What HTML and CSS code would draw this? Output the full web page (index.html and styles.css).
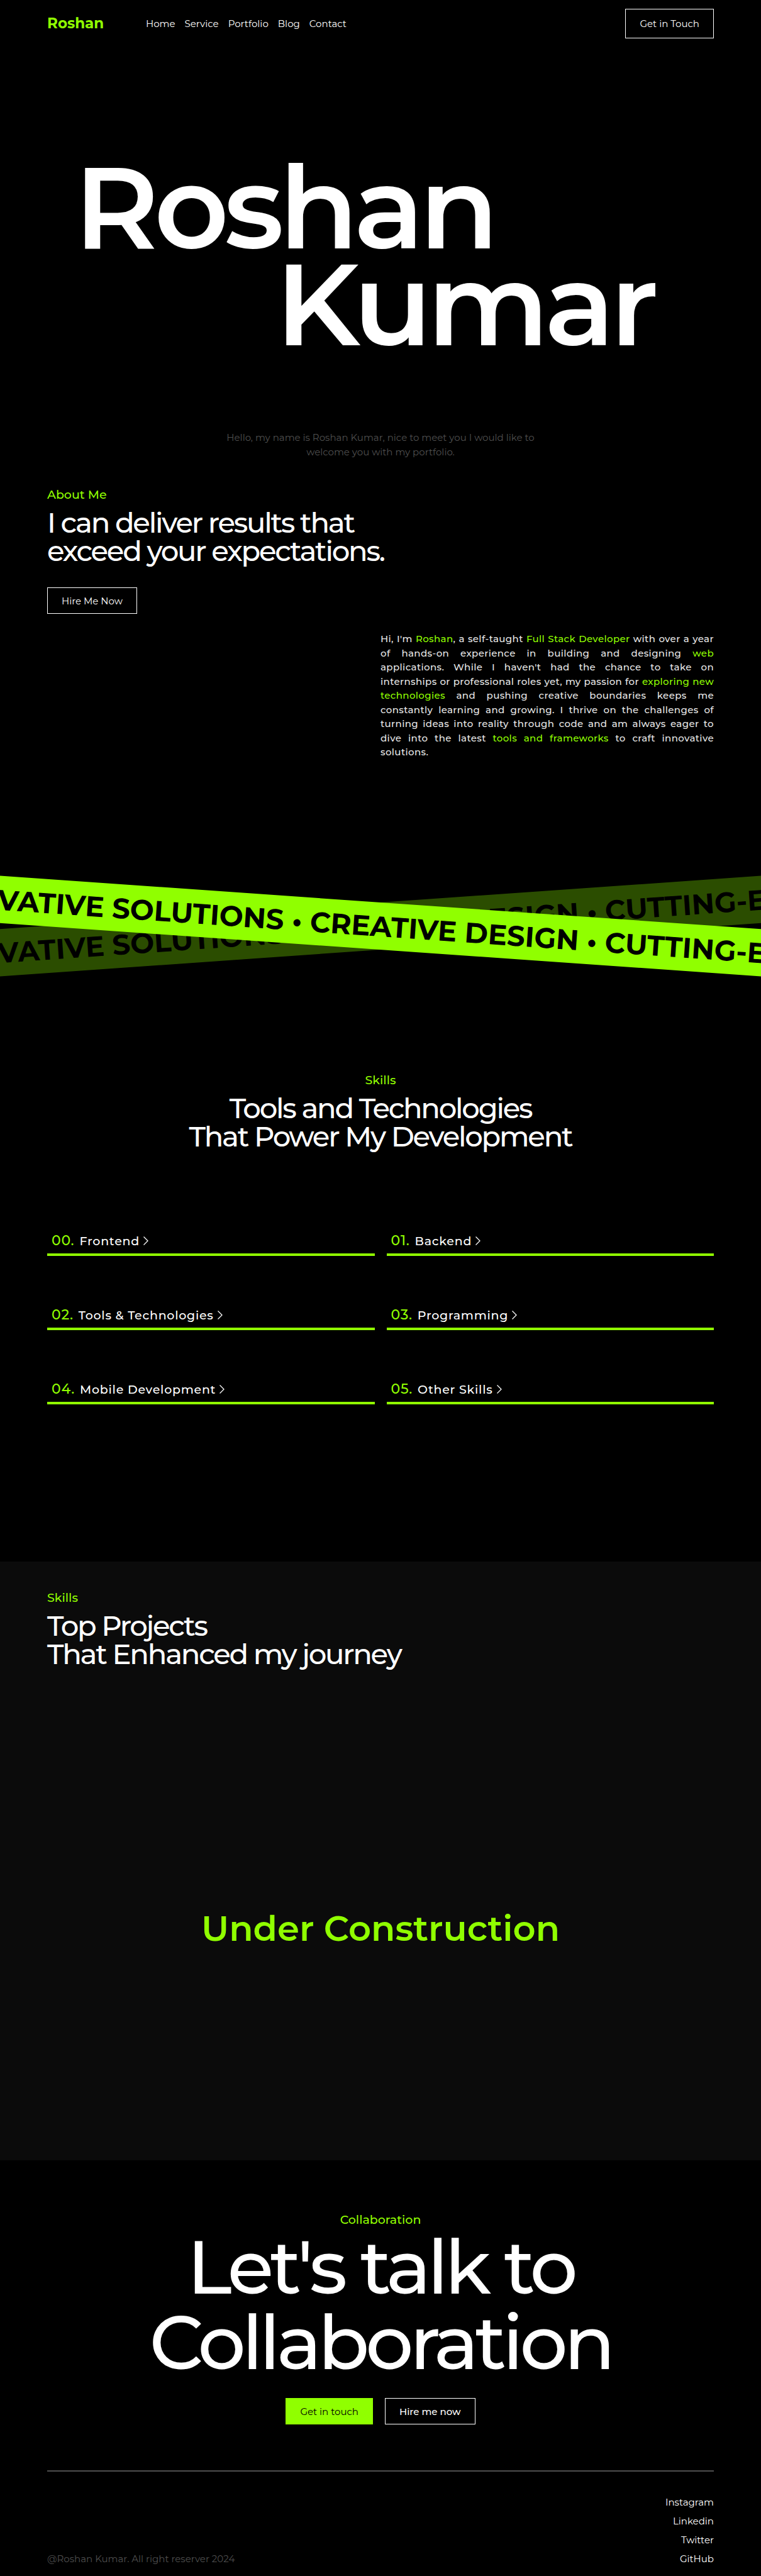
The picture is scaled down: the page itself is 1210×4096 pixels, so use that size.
FILE: index.html
```
<!DOCTYPE html>
<html lang="en">
<head>
<meta charset="utf-8">
<meta name="viewport" content="width=device-width, initial-scale=1">
<title>Roshan Kumar</title>
<link rel="stylesheet" href="styles.css">
</head>
<body>
<header class="header">
  <a class="logo" href="#home">Roshan</a>
  <nav class="nav">
    <a href="#home">Home</a>
    <a href="#skills">Service</a>
    <a href="#projects">Portfolio</a>
    <a href="#about">Blog</a>
    <a href="#contact">Contact</a>
  </nav>
  <button class="button button-tall" type="button">Get in Touch</button>
</header>

<main>
  <section class="hero" id="home">
    <h1 class="hero-title"><span>Roshan</span><span class="hero-last">Kumar</span></h1>
    <p class="hero-intro">Hello, my name is Roshan Kumar, nice to meet you I would like to<br>welcome you with my portfolio.</p>
  </section>

  <section class="about" id="about">
    <p class="label">About Me</p>
    <h2 class="heading">I can deliver results that<br>exceed your expectations.</h2>
    <button class="button" type="button">Hire Me Now</button>
    <p class="bio">Hi, I'm <em>Roshan</em>, a self-taught <em>Full Stack Developer</em> with over a year of hands-on experience in building and designing <em>web</em> applications. While I haven't had the chance to take on internships or professional roles yet, my passion for <em>exploring new technologies</em> and pushing creative boundaries keeps me constantly learning and growing. I thrive on the challenges of turning ideas into reality through code and am always eager to dive into the latest <em>tools and frameworks</em> to craft innovative solutions.</p>
  </section>

  <div class="ribbons">
    <div class="ribbon ribbon-back"><span>INNOVATIVE SOLUTIONS • CREATIVE DESIGN • CUTTING-EDGE</span></div>
    <div class="ribbon ribbon-front"><span>INNOVATIVE SOLUTIONS • CREATIVE DESIGN • CUTTING-EDGE</span></div>
  </div>

  <section class="skills" id="skills">
    <p class="label">Skills</p>
    <h2 class="heading">Tools and Technologies<br>That Power My Development</h2>
    <ul class="skill-grid">
      <li><span class="number">00.</span><a href="#skills">Frontend</a><svg class="chevron" viewBox="0 0 8 14"><path d="M.5.5 7 7 .5 13.500"/></svg></li>
      <li><span class="number">01.</span><a href="#skills">Backend</a><svg class="chevron" viewBox="0 0 8 14"><path d="M.5.5 7 7 .5 13.500"/></svg></li>
      <li><span class="number">02.</span><a href="#skills">Tools &amp; Technologies</a><svg class="chevron" viewBox="0 0 8 14"><path d="M.5.5 7 7 .5 13.500"/></svg></li>
      <li><span class="number">03.</span><a href="#skills">Programming</a><svg class="chevron" viewBox="0 0 8 14"><path d="M.5.5 7 7 .5 13.500"/></svg></li>
      <li><span class="number">04.</span><a href="#skills">Mobile Development</a><svg class="chevron" viewBox="0 0 8 14"><path d="M.5.5 7 7 .5 13.500"/></svg></li>
      <li><span class="number">05.</span><a href="#skills">Other Skills</a><svg class="chevron" viewBox="0 0 8 14"><path d="M.5.5 7 7 .5 13.500"/></svg></li>
    </ul>
  </section>

  <section class="projects" id="projects">
    <p class="label">Skills</p>
    <h2 class="heading">Top Projects<br>That Enhanced my journey</h2>
    <p class="notice">Under Construction</p>
  </section>

  <section class="contact" id="contact">
    <p class="label">Collaboration</p>
    <h2 class="contact-title">Let's talk to<br>Collaboration</h2>
    <div class="actions">
      <button class="button button-solid" type="button">Get in touch</button>
      <button class="button button-medium" type="button">Hire me now</button>
    </div>
  </section>
</main>

<footer class="footer">
  <p>@Roshan Kumar. All right reserver 2024</p>
  <nav class="social">
    <a href="#instagram">Instagram</a>
    <a href="#linkedin">Linkedin</a>
    <a href="#twitter">Twitter</a>
    <a href="#github">GitHub</a>
  </nav>
</footer>
</body>
</html>
```
FILE: styles.css
```
:root {
  --accent: #90ff00;
  --muted: #4f4f4f;
  --edge: 75px;
}

* {
  box-sizing: border-box;
}

body {
  margin: 0;
  background: #000;
  color: #fff;
  font-family: Montserrat, Inter, sans-serif;
  font-size: 15px;
  line-height: 23px;
}

h1, h2, p, ul {
  margin: 0;
  padding: 0;
  font-weight: 500;
}

a {
  color: inherit;
  text-decoration: none;
}

.header {
  display: flex;
  align-items: center;
  padding: 14px var(--edge);
}

.logo {
  width: 157px;
  color: var(--accent);
  font-size: 23px;
  font-weight: 700;
}

.nav {
  display: flex;
  gap: 15px;
  margin-right: auto;
}

.button {
  height: 42px;
  padding: 0 22px;
  border: 1px solid #fff;
  background: transparent;
  color: #fff;
  font: inherit;
}

.button-tall {
  height: 47px;
}

.button-medium {
  font-weight: 500;
}

.button-solid {
  border-color: var(--accent);
  background: var(--accent);
  color: #000;
}

.hero {
  padding: 177px var(--edge) 0;
}

.hero-title {
  display: flex;
  flex-direction: column;
  padding: 0 95px 0 43px;
  font-size: 184px;
  font-weight: 600;
  letter-spacing: -0.04em;
  line-height: 154px;
}

.hero-last {
  align-self: flex-end;
}

.hero-intro {
  margin-top: 124px;
  color: var(--muted);
  font-weight: 400;
  text-align: center;
}

.about {
  padding: 45px var(--edge) 0;
}

.label {
  color: var(--accent);
  font-size: 19px;
  line-height: 24px;
}

.heading {
  margin-top: 9px;
  font-size: 45px;
  letter-spacing: -0.05em;
  line-height: 45px;
}

.about .button {
  display: block;
  margin-top: 36px;
}

.bio {
  width: 50%;
  min-height: 203px;
  margin: 29px 0 0 auto;
  color: #e8e8e8;
  letter-spacing: 0.025em;
  line-height: 1.5;
  text-align: justify;
}

.bio em {
  color: var(--accent);
  font-style: normal;
}

.ribbons {
  display: grid;
  grid-template-columns: minmax(0, 1fr);
  align-items: center;
  height: 192px;
  margin-top: 168px;
  overflow: hidden;
}

.ribbon {
  display: flex;
  grid-area: 1 / 1;
  justify-content: center;
  margin: 0 -60px;
  padding-right: 18px;
  background: var(--accent);
  color: #000;
  font-size: 45px;
  font-weight: 700;
  line-height: 75px;
  white-space: nowrap;
}

.ribbon-back {
  opacity: 0.3;
  transform: rotate(-4deg);
}

.ribbon-front {
  transform: rotate(4deg);
}

.skills {
  padding: 138px var(--edge) 250px;
}

.skills .label,
.skills .heading,
.contact {
  text-align: center;
}

.skill-grid {
  display: grid;
  grid-template-columns: 1fr 1fr;
  gap: 80px 19px;
  margin-top: 130px;
  list-style: none;
}

.skill-grid li {
  display: flex;
  align-items: baseline;
  padding: 0 7px 5px;
  border-bottom: 4px solid var(--accent);
  font-size: 19px;
  font-weight: 500;
  letter-spacing: 0.04em;
  line-height: 28px;
}

.number {
  margin-right: 8px;
  color: var(--accent);
  font-size: 22px;
}

.chevron {
  width: 8px;
  height: 14px;
  margin-left: 6px;
  fill: none;
  stroke: #fff;
  stroke-width: 1.3;
}

.projects {
  padding: 46px var(--edge) 335px;
  background: #0b0b0b;
}

.notice {
  margin-top: 380px;
  color: var(--accent);
  font-size: 56px;
  font-weight: 600;
  line-height: 68px;
  text-align: center;
}

.contact {
  padding: 83px var(--edge) 73px;
}

.contact-title {
  margin-top: 2px;
  font-size: 120px;
  letter-spacing: -0.05em;
  line-height: 120px;
}

.actions {
  display: flex;
  justify-content: center;
  gap: 19px;
  margin-top: 29px;
}

.footer {
  display: flex;
  align-items: flex-end;
  justify-content: space-between;
  margin: 0 var(--edge);
  padding: 34px 0 15px;
  border-top: 2px solid var(--muted);
  line-height: 30px;
}

.footer p {
  color: var(--muted);
  font-weight: 400;
}

.social {
  display: flex;
  flex-direction: column;
  align-items: flex-end;
}
```
